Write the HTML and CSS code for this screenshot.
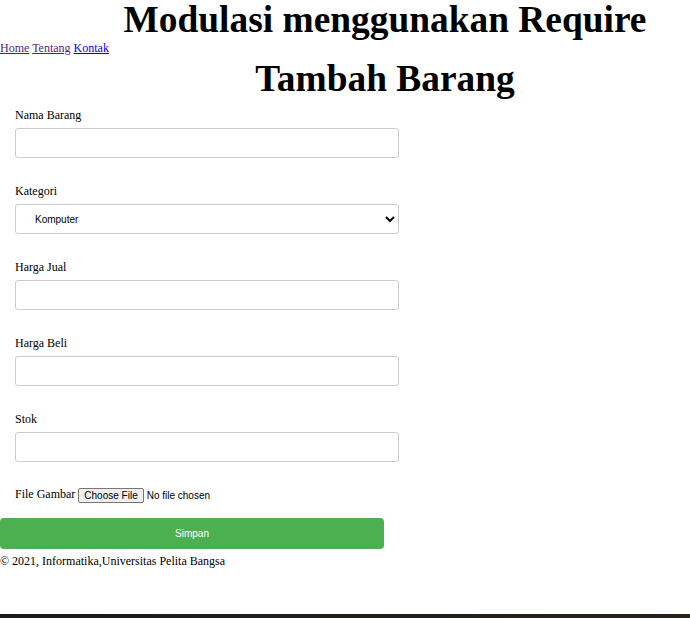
FILE: index.html
```html
<!DOCTYPE html>
<html lang="id">
<head>
<meta charset="utf-8">
<title>Tambah Barang</title>
<link rel="stylesheet" href="styles.css">
</head>
<body>
<header class="top">
  <h1 class="site-title">Modulasi menggunakan Require</h1>
  <nav class="nav"><a class="link visited" href="#">Home</a> <a class="link visited" href="#">Tentang</a> <a class="link" href="#">Kontak</a></nav>
</header>
<main class="content">
  <h2 class="page-title">Tambah Barang</h2>
  <form class="form">
    <div class="field">
      <label class="label">Nama Barang</label>
      <input class="input" type="text">
    </div>
    <div class="field">
      <label class="label">Kategori</label>
      <select class="input select">
        <option>Komputer</option>
      </select>
    </div>
    <div class="field">
      <label class="label">Harga Jual</label>
      <input class="input" type="text">
    </div>
    <div class="field">
      <label class="label">Harga Beli</label>
      <input class="input" type="text">
    </div>
    <div class="field">
      <label class="label">Stok</label>
      <input class="input" type="text">
    </div>
    <div class="file-row">
      <label class="label">File Gambar</label>
      <input class="file" type="file">
    </div>
    <button class="submit" type="button">Simpan</button>
  </form>
</main>
<footer class="footer">© 2021, Informatika,Universitas Pelita Bangsa</footer>
<div class="taskbar"></div>
</body>
</html>
```
FILE: styles.css
```css
html, body {
  margin: 0;
  padding: 0;
  background: #ffffff;
}
body {
  font-family: "Liberation Serif", "Times New Roman", serif;
  font-size: 12px;
  color: #000000;
}
.top {
  display: flex;
  flex-direction: column;
}
.site-title {
  margin: 0 0 2px 0;
  padding-left: 80px;
  font-size: 37.4px;
  line-height: 39px;
  font-weight: bold;
  text-align: center;
}
.nav {
  line-height: 14px;
}
.link {
  color: #0000ee;
  text-decoration: underline;
}
.link.visited {
  color: #551a8b;
}
.page-title {
  margin: 4px 0 10px 0;
  padding-left: 80px;
  font-size: 37.4px;
  line-height: 39px;
  font-weight: bold;
  text-align: center;
}
.form {
  display: flex;
  flex-direction: column;
  width: 400px;
}
.field {
  display: flex;
  flex-direction: column;
  gap: 6px;
  padding-left: 15px;
  margin-bottom: 26px;
}
.label {
  line-height: 14px;
}
.input {
  box-sizing: border-box;
  width: 384px;
  height: 30px;
  margin: 0;
  padding: 0 15px;
  border: 1px solid #cccccc;
  border-radius: 3px;
  background: #ffffff;
  font-family: "Liberation Sans", Arial, sans-serif;
  font-size: 10px;
  color: #000000;
}
.select {
  padding-left: 15px;
}
.file-row {
  display: flex;
  align-items: center;
  gap: 3px;
  padding-left: 15px;
  height: 15px;
}
.file-row .label {
  margin-top: -3px;
}
.file {
  font-family: "Liberation Sans", Arial, sans-serif;
  font-size: 10px;
  color: #000000;
}
.file::file-selector-button {
  font-family: "Liberation Sans", Arial, sans-serif;
  font-size: 10px;
  height: 15px;
  padding: 0 5px;
  margin-right: 3px;
  border: 1px solid #767676;
  border-radius: 2px;
  background: #efefef;
  color: #000000;
}
.submit {
  margin-top: 15px;
  width: 384px;
  height: 31px;
  border: none;
  border-radius: 4px;
  background: #4caf50;
  color: #ffffff;
  font-family: "Liberation Sans", Arial, sans-serif;
  font-size: 10px;
  cursor: pointer;
}
.footer {
  margin-top: 5px;
  line-height: 14px;
}
.taskbar {
  margin-top: 46px;
  height: 4px;
  background: linear-gradient(90deg, #1c1c1e 0%, #1f1f1c 55%, #2a2118 100%);
}
```
